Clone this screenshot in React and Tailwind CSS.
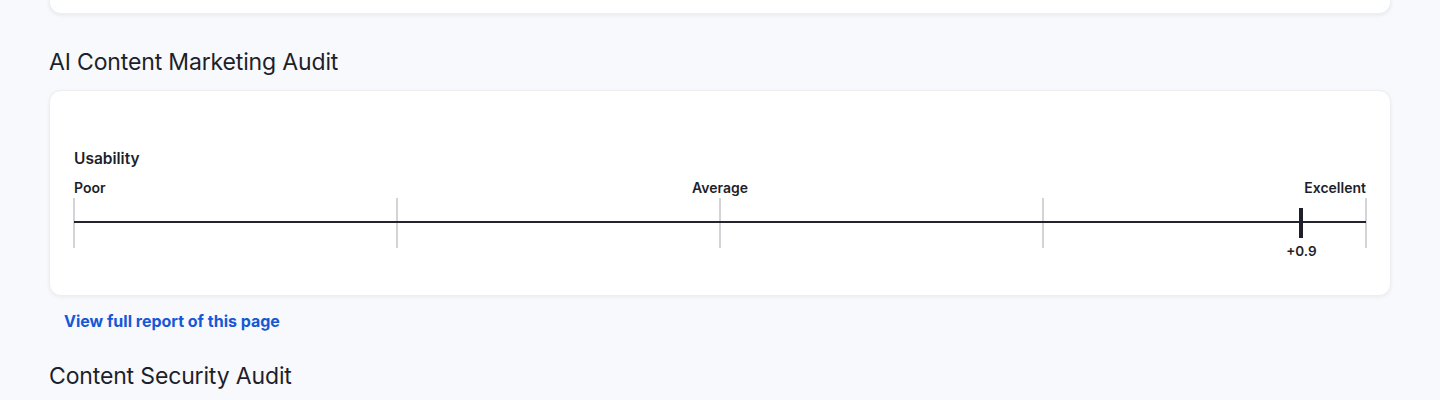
const TICKS = [0, 25, 50, 75, 100];

function Scale({ label, value }) {
  // value on -1..1 scale
  const pct = ((value + 1) / 2) * 100;
  return (
    <div className="flex flex-col">
      <p className="text-[15.5px] leading-5 font-semibold text-[#1e1f2b]">{label}</p>
      <div className="mt-[10px] grid grid-cols-3 text-[14px] leading-[18px] font-semibold text-[#1e1f2b]">
        <span className="text-left">Poor</span>
        <span className="text-center">Average</span>
        <span className="text-right">Excellent</span>
      </div>
      <div className="relative mt-[1px] h-[50px]">
        {/* ticks */}
        <div className="flex h-full justify-between -mx-[1px]">
          {TICKS.map((t) => (
            <div key={t} className="h-full w-[2px] bg-[#d4d4d8]" />
          ))}
        </div>
        {/* axis line */}
        <div className="absolute inset-x-0 top-[23px] h-[2px] bg-[#24242f]" />
        {/* marker */}
        <div
          className="absolute top-[10px] flex w-0 flex-col items-center"
          style={{ left: `${pct}%` }}
        >
          <div className="h-[30px] w-[4px] shrink-0 bg-[#1e1f2b]" />
          <span className="mt-[4px] whitespace-nowrap text-[13.5px] leading-[18px] font-semibold text-[#1e1f2b]">
            +{value.toFixed(1)}
          </span>
        </div>
      </div>
    </div>
  );
}

export default function App() {
  return (
    <div
      className="min-h-[400px] bg-[#f8f9fc] px-[49px] pb-10"
      style={{ fontFamily: 'Inter, "Noto Sans", sans-serif' }}
    >
      <div className="h-[14px] rounded-b-xl border-x border-b border-[#eceef2] bg-white shadow-[0_1px_4px_rgba(0,0,0,0.08)]" />

      <h2 className="mt-[32px] text-[23px] leading-8 font-normal tracking-[-0.15px] text-[#1e1f2b]">
        AI Content Marketing Audit
      </h2>

      <div className="mt-[12px] rounded-xl border border-[#eceef2] bg-white px-6 pt-[58px] pb-[47px] shadow-[0_1px_4px_rgba(0,0,0,0.06)]">
        <Scale label="Usability" value={0.9} />
      </div>

      <a
        href="#"
        className="mt-[15px] ml-[15px] block text-[16px] leading-5 font-bold text-[#1558d6]"
      >
        View full report of this page
      </a>

      <h2 className="mt-[29px] text-[23px] leading-8 font-normal tracking-[-0.15px] text-[#1e1f2b]">
        Content Security Audit
      </h2>
    </div>
  );
}
